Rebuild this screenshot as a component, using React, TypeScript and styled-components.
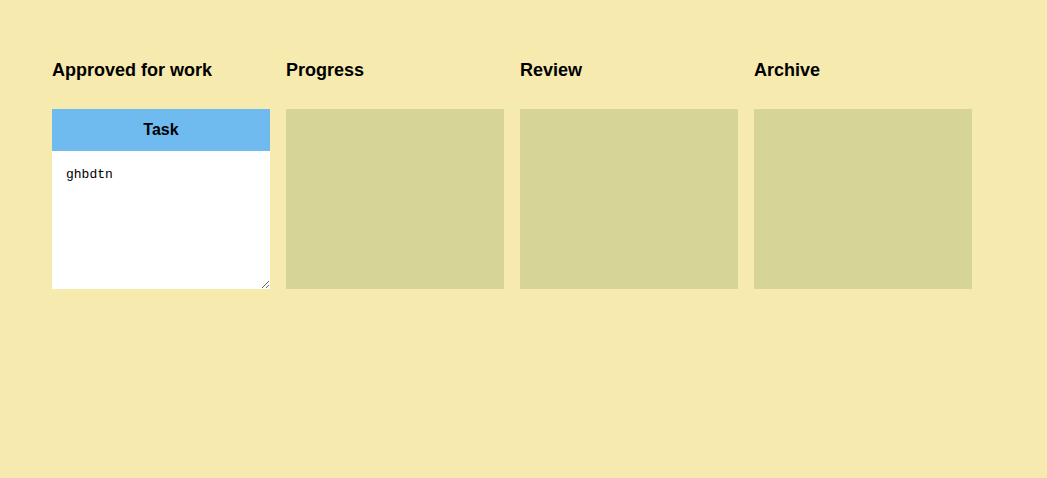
import React, { useState } from 'react';
import styled, { createGlobalStyle } from 'styled-components';

const GlobalStyle = createGlobalStyle`
  html, body {
    margin: 0;
    padding: 0;
    background-color: #f7eaae;
    font-family: "Liberation Sans", Arial, sans-serif;
  }
`;

const Board = styled.div`
  display: flex;
  gap: 16px;
  padding: 59px 52px 0;
  min-height: 478px;
  box-sizing: border-box;
`;

const Column = styled.section`
  width: 218px;
  display: flex;
  flex-direction: column;
`;

const ColumnTitle = styled.h3`
  margin: 0 0 28px;
  font-size: 18px;
  line-height: 22px;
  font-weight: 700;
  color: #000;
`;

const DropZone = styled.div`
  height: 180px;
  background-color: #d7d498;
  display: flex;
  flex-direction: column;
`;

const TaskHeader = styled.div`
  height: 42px;
  background-color: #6fbbf0;
  display: flex;
  align-items: center;
  justify-content: center;
  font-size: 16px;
  font-weight: 700;
  color: #000;
`;

const TaskBody = styled.textarea`
  flex: 1;
  margin: 0;
  border: none;
  outline: none;
  padding: 16px 14px;
  background: #fff;
  font-family: "Liberation Mono", "Courier New", monospace;
  font-size: 13px;
  line-height: 16px;
  color: #000;
  resize: both;
  box-sizing: border-box;
  width: 100%;
`;

const columns = ['Approved for work', 'Progress', 'Review', 'Archive'];

const App: React.FC = () => {
  const [text, setText] = useState('ghbdtn');

  return (
    <>
      <GlobalStyle />
      <Board>
        {columns.map((title, i) => (
          <Column key={title}>
            <ColumnTitle>{title}</ColumnTitle>
            <DropZone>
              {i === 0 && (
                <>
                  <TaskHeader>Task</TaskHeader>
                  <TaskBody value={text} onChange={e => setText(e.target.value)} />
                </>
              )}
            </DropZone>
          </Column>
        ))}
      </Board>
    </>
  );
};

export default App;
